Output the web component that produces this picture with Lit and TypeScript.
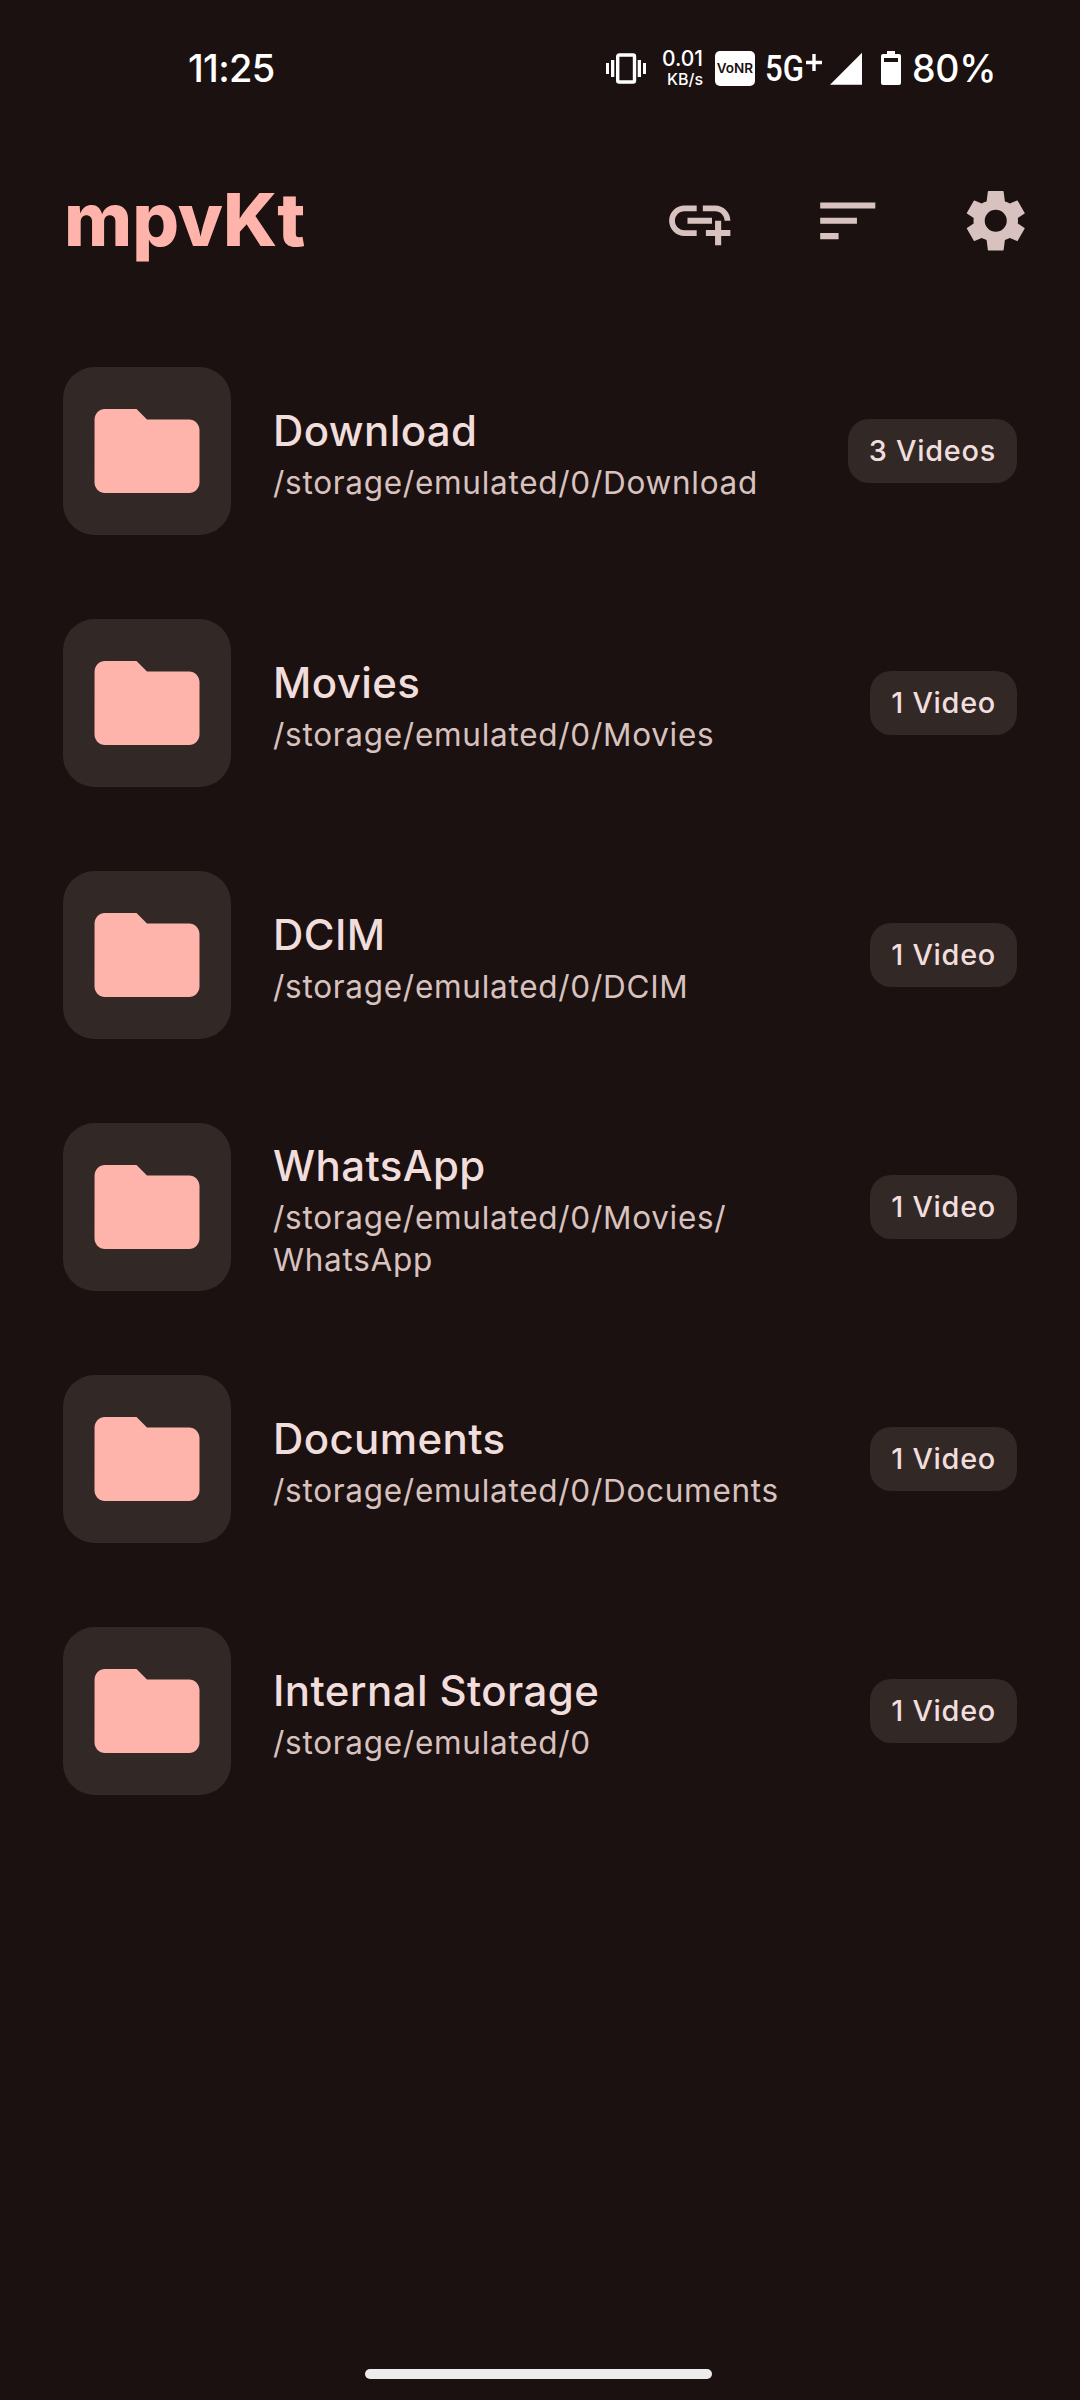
import { LitElement, html, css, svg } from "lit";
import { customElement, property } from "lit/decorators.js";

interface Folder {
  name: string;
  path: string;
  count: string;
}

const FOLDERS: Folder[] = [
  { name: "Download", path: "/storage/emulated/0/Download", count: "3 Videos" },
  { name: "Movies", path: "/storage/emulated/0/Movies", count: "1 Video" },
  { name: "DCIM", path: "/storage/emulated/0/DCIM", count: "1 Video" },
  { name: "WhatsApp", path: "/storage/emulated/0/Movies/\nWhatsApp", count: "1 Video" },
  { name: "Documents", path: "/storage/emulated/0/Documents", count: "1 Video" },
  { name: "Internal Storage", path: "/storage/emulated/0", count: "1 Video" },
];

const ADD_LINK =
  "M8 11h8v2H8v-2zm12.1 1H22c0-2.76-2.24-5-5-5h-4v1.9h4c1.71 0 3.1 1.39 3.1 3.1zM3.9 12c0-1.71 1.39-3.1 3.1-3.1h4V7H7c-2.76 0-5 2.24-5 5s2.24 5 5 5h4v-1.9H7c-1.71 0-3.1-1.39-3.1-3.1zM19 12h-2v3h-3v2h3v3h2v-3h3v-2h-3v-3z";
const SORT = "M3 18h6v-2H3v2zM3 6v2h18V6H3zm0 7h12v-2H3v2z";
const SETTINGS =
  "M9.6 2.3h4.8q.15 0 .17.15l.42 3.3q.85.25 1.6.6l2.35-.95q.15-.05.22.08l2.3 3.95q.07.13-.05.22l-2.2 1.45q.1.9 0 1.8l2.2 1.45q.12.09.05.22l-2.3 3.95q-.07.13-.22.08l-2.35-.95q-.75.35-1.6.6l-.42 3.3q-.02.15-.17.15H9.6q-.15 0-.17-.15L9.01 18.25q-.85-.25-1.6-.6l-2.35.95q-.15.05-.22-.08l-2.3-3.95q-.07-.13.05-.22l2.2-1.45q-.1-.9 0-1.8l-2.2-1.45q-.12-.09-.05-.22l2.3-3.95q.07-.13.22-.08l2.35.95q.75-.35 1.6-.6l.42-3.3q.02-.15.17-.15zM12 8.4a3.6 3.6 0 1 0 0 7.2a3.6 3.6 0 1 0 0-7.2z";
const FOLDER = "M10 4H4c-1.1 0-1.99.9-1.99 2L2 18c0 1.1.9 2 2 2h16c1.1 0 2-.9 2-2V8c0-1.1-.9-2-2-2h-8l-2-2z";

@customElement("status-bar")
export class StatusBar extends LitElement {
  static styles = css`
    :host {
      display: flex;
      align-items: center;
      height: 136px;
      box-sizing: border-box;
      padding: 0 87px 0 188px;
      color: #fff;
      font: 500 38px/46px Inter, sans-serif;
    }
    .time { flex: 1; letter-spacing: -0.7px; }
    .vibrate { margin-right: 17px; }
    .rate {
      display: flex;
      flex-direction: column;
      align-items: flex-end;
      width: 40px;
      margin-right: 12px;
      white-space: nowrap;
    }
    .amount { font-size: 21px; line-height: 21px; }
    .unit { font-size: 16px; line-height: 20px; }
    .vonr {
      width: 40px;
      height: 35px;
      border-radius: 5px;
      background: #fff;
      color: #1b1110;
      font-size: 13.5px;
      font-weight: 600;
      line-height: 35px;
      text-align: center;
      margin-right: 10px;
    }
    .network { display: flex; width: 64.5px; }
    .generation {
      width: 41px;
      font: 500 37.5px/46px Roboto, sans-serif;
      transform: scaleX(0.83);
      transform-origin: left;
    }
    .plus { margin-top: 9px; }
    .signal { margin-right: 19px; }
    .battery { margin-right: 11px; }
    .percent { width: 81px; padding-top: 2px; white-space: nowrap; font-size: 37.5px; letter-spacing: -0.3px; }
    svg { display: block; flex: none; }
  `;

  render() {
    return html`
      <span class="time">11:25</span>
      <svg class="vibrate" width="40" height="31" viewBox="0 0 40 31" fill="#fff">
        <path d="M0 10h3v11H0zM5 7h3.3v17H5zM31.7 7H35v17h-3.3zM37 10h3v11h-3z" />
        <rect x="11.7" y="2" width="16.8" height="27" rx="1.5" fill="none" stroke="#fff" stroke-width="3.4" />
      </svg>
      <div class="rate"><span class="amount">0.01</span><span class="unit">KB/s</span></div>
      <div class="vonr">VoNR</div>
      <div class="network">
        <span class="generation">5G</span>
        <svg class="plus" width="16" height="17" viewBox="0 0 16 17"><path d="M8 0v17M0 8.5h16" stroke="#fff" stroke-width="3.4" /></svg>
      </div>
      <svg class="signal" width="32.5" height="33" viewBox="0 0 33 33"><path d="M33 0v33H0z" fill="#fff" /></svg>
      <svg class="battery" width="20" height="34" viewBox="0 0 20 34">
        <path d="M6 0h8v3h4q2 0 2 2v27q0 2-2 2H2q-2 0-2-2V5q0-2 2-2h4zM3 7v4h14V7z" fill="#fff" fill-rule="evenodd" />
      </svg>
      <span class="percent">80%</span>
    `;
  }
}

@customElement("folder-row")
export class FolderRow extends LitElement {
  @property({ attribute: false }) folder!: Folder;

  static styles = css`
    :host {
      display: flex;
      align-items: center;
      gap: 42px;
      height: 252px;
      box-sizing: border-box;
      padding: 42px 63px;
    }
    .tile {
      display: grid;
      place-items: center;
      flex: none;
      width: 168px;
      height: 168px;
      border-radius: 31.5px;
      background: #322826;
    }
    .text { flex: 1; min-width: 0; }
    .name { color: #f1dedc; font-size: 42px; line-height: 63px; font-weight: 500; letter-spacing: 0.4px; }
    .path { color: #d8c2bf; font-size: 31.5px; line-height: 42px; letter-spacing: 0.72px; white-space: pre; }
    .badge {
      flex: none;
      padding: 11px 21px;
      border-radius: 21px;
      background: #322826;
      color: #f1dedc;
      font-size: 28.875px;
      line-height: 42px;
      font-weight: 500;
      letter-spacing: 0.73px;
    }
  `;

  render() {
    const { name, path, count } = this.folder;
    return html`
      <div class="tile">
        <svg width="126" height="126" viewBox="0 0 24 24" fill="#ffb4ab"><path d=${FOLDER} /></svg>
      </div>
      <div class="text">
        <div class="name">${name}</div>
        <div class="path">${path}</div>
      </div>
      <div class="badge">${count}</div>
    `;
  }
}

@customElement("app-root")
export class AppRoot extends LitElement {
  static styles = css`
    :host {
      display: flex;
      flex-direction: column;
      width: 1080px;
      height: 2400px;
      box-sizing: border-box;
      overflow: hidden;
      background: #1b1110;
      font-family: Inter, sans-serif;
    }
    .bar {
      display: flex;
      align-items: center;
      height: 170px;
      margin-bottom: 19px;
      padding: 0 47.5px 0 64px;
    }
    .title { flex: 1; margin: 0; padding-bottom: 2px; color: #ffb4ab; font-size: 73.5px; line-height: 94px; font-weight: 800; }
    .actions { display: flex; gap: 74.7px; }
    .actions svg { display: block; fill: #d8c2bf; fill-rule: evenodd; }
    .list { flex: 1; }
    .handle { width: 347px; height: 10.5px; border-radius: 5.5px; background: #ececec; margin: 0 0 21px 365px; }
  `;

  private icon(d: string) {
    return html`<svg width="73.5" height="73.5" viewBox="0 0 24 24">${svg`<path d=${d} />`}</svg>`;
  }

  render() {
    return html`
      <status-bar></status-bar>
      <header class="bar">
        <h1 class="title">mpvKt</h1>
        <div class="actions">${[ADD_LINK, SORT, SETTINGS].map((d) => this.icon(d))}</div>
      </header>
      <main class="list">${FOLDERS.map((f) => html`<folder-row .folder=${f}></folder-row>`)}</main>
      <div class="handle"></div>
    `;
  }
}
